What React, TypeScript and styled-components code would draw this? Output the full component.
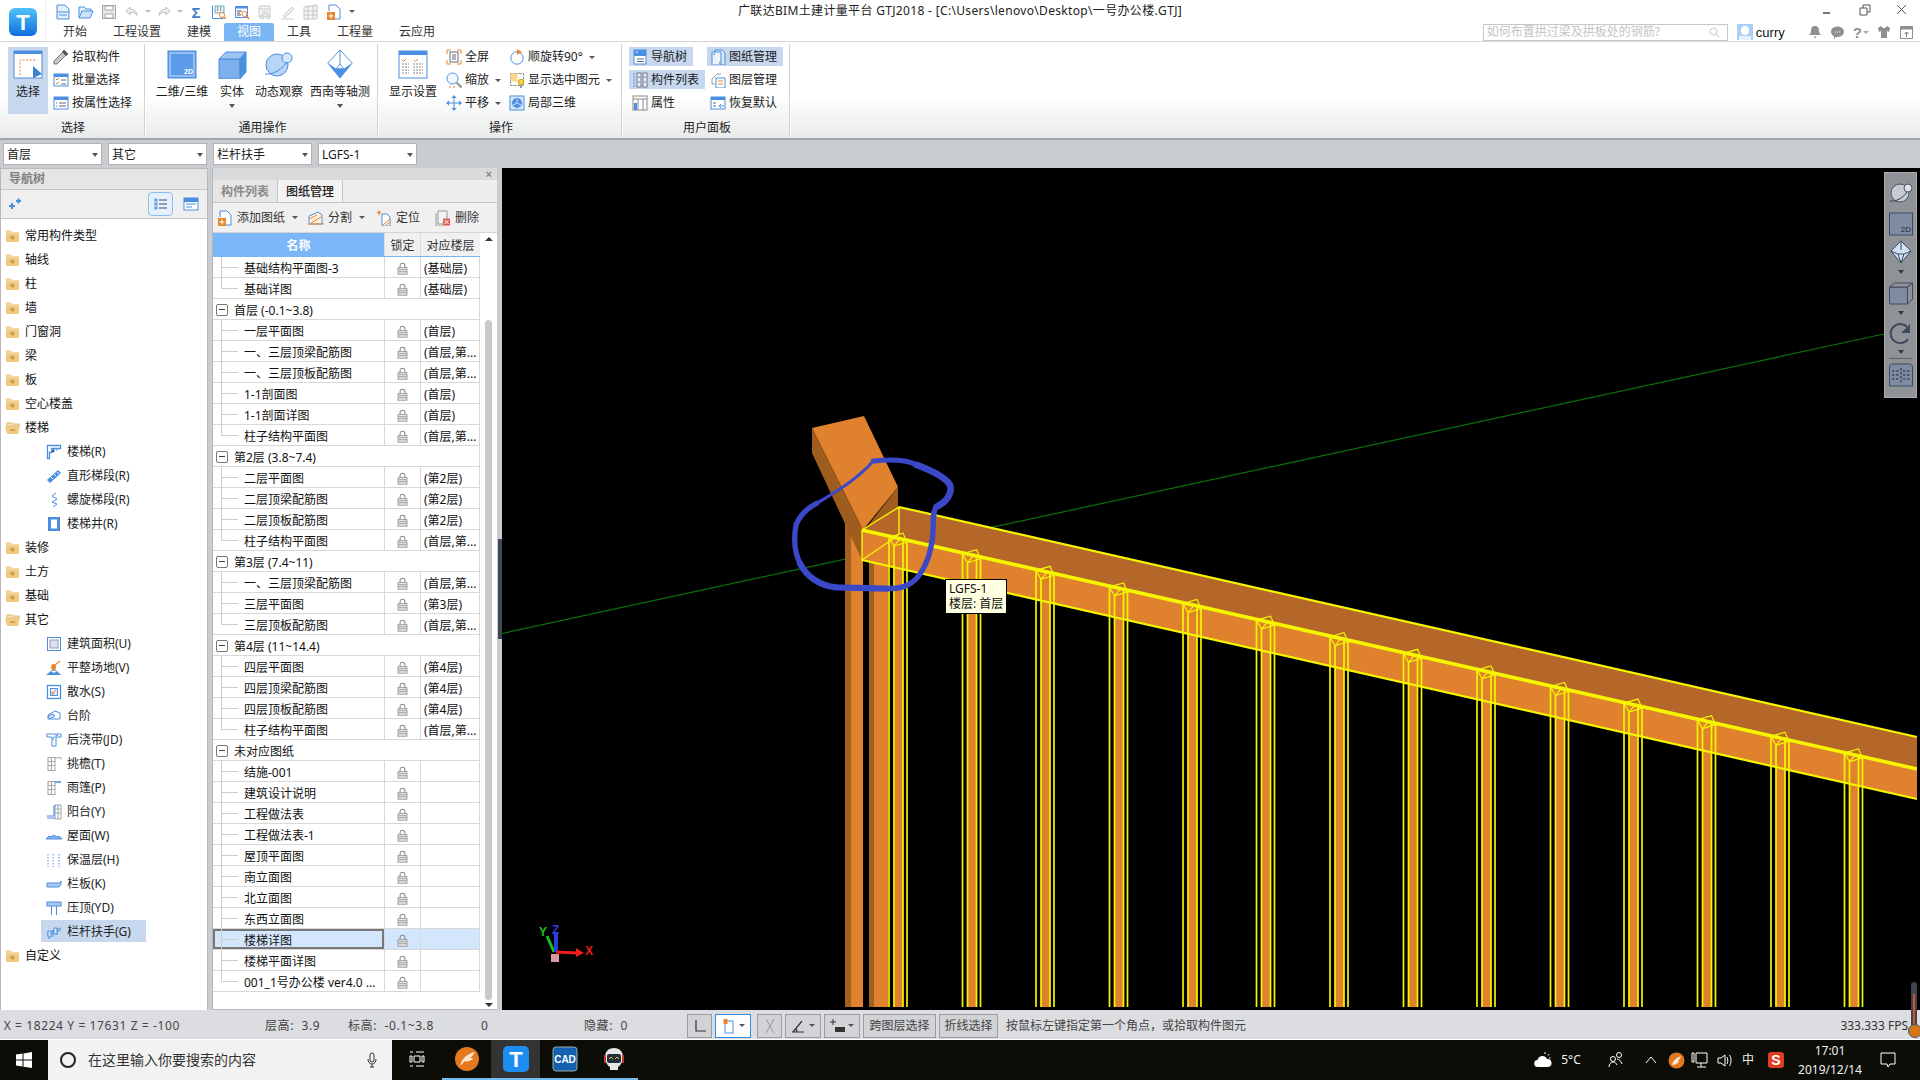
import React from "react";
import styled, { createGlobalStyle } from "styled-components";

const FONT = `"Noto Sans", "Noto Sans CJK SC", "Liberation Sans", sans-serif`;
const B = "#4a8fe0";
const O = "#e8842c";
const G = "#a6a6a6";

const Global = createGlobalStyle`
  html, body { margin: 0; padding: 0; background: #000; }
  * { box-sizing: border-box; }
`;

const Root = styled.div`
  position: relative; width: 1920px; height: 1080px; overflow: hidden;
  display: flex; flex-direction: column; background: #fff;
  font-family: ${FONT}; font-size: 12px; line-height: 1; color: #1c1c1c;
`;

/* ---------- icons ---------- */
const Svg = styled.svg<{ $s: number }>`
  width: ${(p) => p.$s}px; height: ${(p) => p.$s}px; flex: none; display: block;
`;

const icons: Record<string, React.ReactNode> = {
  new: <><path d="M2 1h8l4 4v10H2z" fill="#e4effb" stroke={B} /><path d="M2 8h12" stroke={B} /><path d="M4 11h8" stroke={B} /></>,
  open: <><path d="M1 14V3h5l2 2h5v3" fill="#e4effb" stroke={B} /><path d="M1 14l3-7h11l-3 7z" fill="#cfe2f8" stroke={B} /></>,
  save: <><path d="M1.5 1.5h13v13h-13z" fill="#e8e8e8" stroke={G} /><path d="M4 2h8v4H4zM4 10h8v4H4z" fill="#fff" stroke={G} /></>,
  undo: <path d="M6 3 2 7l4 4V8.5c4-.5 6 1 7 3-.3-4-3-6.5-7-6.5z" fill="#eee" stroke="#bbb" />,
  redo: <path d="M10 3l4 4-4 4V8.5c-4-.5-6 1-7 3 .3-4 3-6.5 7-6.5z" fill="#eee" stroke="#bbb" />,
  sigma: <text x="8" y="14" textAnchor="middle" fontSize="15" fontWeight="700" fill="#3d7fd0" fontFamily="Liberation Sans">Σ</text>,
  gridMag: <><path d="M1.5 14.5V1.5M1.5 14.5h11" stroke={B} /><path d="M4 2h9v7H4z" fill="#dfeafa" stroke="#7aa" /><path d="M6 4h1M9 4h1M6 6h1M9 6h1" stroke="#555" /><circle cx="11" cy="11" r="2.5" fill="#fff" stroke={O} /><path d="M13 13l2 2" stroke={O} strokeWidth="1.5" /></>,
  tblMag: <><path d="M1.5 2.5h12v11h-12z" fill="#fff" stroke={B} /><path d="M1.5 2.5h12v2h-12z" fill={B} /><path d="M3 7h5M3 9h3M3 11h4" stroke="#556" /><circle cx="10.5" cy="10" r="2.5" fill="#fff" stroke={O} /><path d="M12.5 12l2.5 3" stroke={O} strokeWidth="1.5" /></>,
  greyTbl: <><path d="M2 2h11v11H2z" fill="#f4f4f4" stroke="#ccc" /><path d="M2 5h11M5 8h6M5 10h6" stroke="#ccc" /><circle cx="5" cy="13" r="2" fill="none" stroke="#ccc" /><circle cx="11" cy="13" r="2" fill="none" stroke="#ccc" /></>,
  greyPen: <><path d="M3 12 12 3l2 2-9 9z" fill="#eee" stroke="#ccc" /><path d="M1 15h13" stroke="#ccc" /></>,
  greyGrid: <path d="M1 3l13-2v14H1zM5 2.5V15M10 2V15M1 7h13M1 11h13" fill="#f6f6f6" stroke="#c4c4c4" />,
  addPage: <><path d="M3 1h7l4 4v10H7" fill="#fff" stroke={B} /><path d="M3 1v6" stroke={B} /><rect x="1" y="8" width="8" height="8" fill={O} /><path d="M5 9.5v5M2.5 12h5" stroke="#fff" /></>,
  pick: <><path d="M11 1l4 4-2 1-9 9-3 0 0-3 9-9z" fill="#c7c7c7" stroke="#777" /><path d="M11 1l4 4-2 2-4-4z" fill="#555" /></>,
  batch: <><rect x="1" y="2" width="14" height="12" fill="#fff" stroke={B} /><rect x="1" y="2" width="14" height="3" fill={B} /><path d="M3 7l1 1 2-2M3 11l1 1 2-2" stroke={O} fill="none" /><path d="M8 8h5M8 12h5" stroke="#667" /></>,
  attr: <><rect x="1" y="2" width="14" height="12" fill="#fff" stroke={B} /><rect x="1" y="2" width="14" height="3" fill={B} /><path d="M3 8h1M3 11h1M6 8h7M6 11h7" stroke="#667" /></>,
  full: <><path d="M1 5V1h4M11 1h4v4M15 11v4h-4M5 15H1v-4" fill="none" stroke={O} /><rect x="4" y="3" width="8" height="10" fill="#fff" stroke="#667" /><path d="M6 6h4M6 8h4M6 10h4" stroke="#667" /></>,
  zoom: <><circle cx="6.5" cy="6.5" r="5.5" fill="#f2f7fd" stroke={B} /><path d="M10.5 10.5l5 5" stroke="#999" strokeWidth="2.4" /><path d="M3 15h2M7 15h2" stroke={O} /></>,
  pan: <><path d="M8 0l2.5 3h-5zM8 16l2.5-3h-5zM0 8l3-2.5v5zM16 8l-3-2.5v5z" fill={B} /><path d="M8 3v10M3 8h10" stroke={B} /></>,
  rot: <><circle cx="8" cy="9" r="6.2" fill="none" stroke={B} /><path d="M8 0l5 3-5 3z" fill={O} /></>,
  showSel: <><path d="M1.5 1.5h13v12h-13z" fill="none" stroke="#888" strokeDasharray="3 1" /><rect x="1.5" y="1.5" width="7" height="8" fill="#fbd98c" /><circle cx="12" cy="10" r="2.8" fill="#f7d24a" stroke="#c9a020" /><path d="M11 13.5h2V16h-2z" fill="#999" /></>,
  local: <><rect x="1" y="1" width="14" height="14" fill="#d7e6f8" stroke={B} /><circle cx="8" cy="8" r="5" fill={B} /><path d="M8 8V4M8 8l-4 2M8 8l4 2" stroke="#cfe2f8" /></>,
  nav: <><rect x="2" y="1" width="12" height="14" fill="#fff" stroke={B} /><rect x="2" y="1" width="12" height="6" fill={B} /><path d="M4 3h2" stroke="#fff" /><path d="M5 10h7M5 12.5h7" stroke="#667" /></>,
  drawMgr: <><path d="M5 1h7l3 3v12H5z" fill="#dbe8f8" stroke={B} /><path d="M2 3h9v13H2z" fill="#eef4fc" stroke={B} /><path d="M4 6V5h1M9 14h1v-1" stroke="#667" fill="none" /></>,
  list: <><path d="M1 2h2M1 5h2M1 8h2M1 11h2M1 14h2" stroke={B} /><rect x="5" y="1" width="4" height="14" fill="#e8f0fb" stroke="#778" /><rect x="11" y="1" width="4" height="14" fill="#e8f0fb" stroke="#778" /><path d="M6 5h2M6 10h2M12 5h2M12 10h2" stroke="#778" /></>,
  layer: <><path d="M2 7l5-5h4" fill="none" stroke="#999" /><path d="M2 7v5h3" fill="none" stroke="#999" /><rect x="6" y="6" width="9" height="10" fill="#fff" stroke={B} /><path d="M8 9h5M8 12h5" stroke={O} /></>,
  prop: <><rect x="1" y="1" width="14" height="14" fill="#fff" stroke="#888" /><path d="M1 4h14M6 4v11M11 4v11" stroke="#888" /><rect x="2" y="8" width="3" height="7" fill={B} /></>,
  reset: <><rect x="1" y="2" width="14" height="12" fill="#fff" stroke={B} /><rect x="1" y="2" width="14" height="3" fill={B} /><path d="M3 8h3M3 11h3" stroke="#667" /><path d="M9 11h5M11 9l-2 2 2 2" stroke={B} fill="none" /></>,
  plusPlus: <><path d="M2 10h6M5 7v6M9 5h5M11.5 2.5v5" stroke={B} strokeWidth="2" /></>,
  tList: <><rect x="2" y="3" width="2" height="2" fill="none" stroke={B} /><rect x="2" y="7" width="2" height="2" fill="none" stroke={B} /><rect x="2" y="11" width="2" height="2" fill="none" stroke={B} /><path d="M6 4h8M6 8h8M6 12h8" stroke="#446" /></>,
  tCard: <><rect x="1" y="2" width="14" height="12" fill="#fff" stroke={B} /><rect x="1" y="2" width="14" height="4" fill={B} /><path d="M3 8h10M3 11h6" stroke={B} /></>,
  folder: <><path d="M1 4V2.5h5L7 4h7v10H1z" fill="#f0cb84" /><path d="M1 5h13" stroke="#f8e3b4" /><path d="M7.5 7v5M5 9.5h5" stroke="#c79a3e" strokeWidth="1.4" /></>,
  folderOpen: <><path d="M2 3h5l1 1h6v2H2z" fill="#f8e3b4" stroke="#ddb66a" /><path d="M0 6h15l-2 8H2z" fill="#f0cb84" /><path d="M5 10h5" stroke="#c79a3e" strokeWidth="1.4" /></>,
  stair: <><path d="M1.5 1.5h13v3h-9v4h-2v6h-2z" fill="#fff" stroke={B} strokeWidth="1.3" /><path d="M8 4.5V8h-2.5M11 4.5V7" stroke={B} /></>,
  straight: <><path d="M1 12 12 2l3 3L4 15z" fill={B} /><path d="M5 9l2 2M8 6l2 2M11 4l2 2" stroke="#fff" /></>,
  spiral: <path d="M10 1 6 4l5 3-5 3 5 2-4 3" fill="none" stroke={B} />,
  well: <><rect x="2" y="1" width="12" height="14" fill={B} /><rect x="5" y="3.5" width="6" height="9" fill="#fff" /></>,
  area: <><rect x="1.5" y="1.5" width="13" height="13" fill="#fff" stroke={B} /><rect x="4" y="4" width="8" height="8" fill="#dde4ef" stroke="#8a9ab5" /></>,
  level: <><path d="M0 15l5-4 3 2 3-2 4 4z" fill={B} /><path d="M5 11l3-3 3 3z" fill="#9aa" /><ellipse cx="7.5" cy="7" rx="2.5" ry="3" fill={O} /><path d="M9 5l5-4" stroke={O} strokeWidth="1.2" /></>,
  apron: <><rect x="1.5" y="1.5" width="13" height="13" fill="#fff" stroke={B} strokeWidth="1.3" /><rect x="4.5" y="4.5" width="7" height="7" fill="#e6eef9" stroke={B} /><path d="M10 6 6 10M6 7.5V10h2.5" stroke={O} fill="none" /></>,
  step: <><path d="M2 7l7-4 5 2v6H2z" fill="#fff" stroke={B} /><path d="M2 8l5-2 2 2-5 3z" fill="#cfe2f8" stroke={B} /></>,
  strip: <><path d="M1 2h14v3H10v9H6V5H1z" fill="#fff" stroke={B} /><path d="M7 8c0-3 2-4 5-5" stroke={B} fill="none" /></>,
  eaves: <><rect x="2" y="1.5" width="7" height="13" fill="#fff" stroke={G} /><path d="M2 5.5h7M2 9.5h7M5.5 1.5v13" stroke={G} /><path d="M9 2l6-.5v2" stroke={G} fill="none" /></>,
  canopy: <><rect x="2" y="1.5" width="7" height="13" fill="#fff" stroke={G} /><path d="M2 5.5h7M2 9.5h7M5.5 1.5v13" stroke={G} /><path d="M9 2h6" stroke={B} strokeWidth="1.6" /></>,
  balcony: <><rect x="9" y="1" width="6" height="14" fill="#fff" stroke={G} /><path d="M9 5h6M9 9h6M12 1v14" stroke={G} /><path d="M1 14h8M1 12h7V2h2" stroke={B} strokeWidth="1.2" fill="none" /></>,
  roof: <path d="M0 11l3-3 2 1 3-2 3 2 2-1 3 3z" fill="#8ab4ea" stroke={B} />,
  insulate: <path d="M2 2v13M13 2v13M7 2v13" stroke={B} strokeDasharray="1.5 1.5" fill="none" />,
  parapet: <path d="M1 7h12l2-2v3l-2 3H1z" fill="#a9c9f2" stroke={B} />,
  coping: <><rect x="1" y="2" width="14" height="4" fill="#a9c9f2" stroke={B} /><path d="M5.5 6v9M10.5 6v9" stroke={B} /></>,
  rail: <><path d="M1 9l14-5M3 8v7M7 6v7M11 4v7" stroke={B} fill="none" /><path d="M1 11l14-5" stroke={B} /><path d="M2 7h3v6H2zM8 4h3v6H8z" fill="#dce9fa" stroke={B} /></>,
  lock: <><path d="M5 7V4.5C5 2.5 6.3 1.5 8 1.5s3 1 3 3V7" fill="none" stroke="#888" strokeWidth="1.3" /><rect x="2.5" y="7" width="11" height="8" fill="#eee" stroke="#888" /><path d="M3 9.5h10M3 12h10" stroke="#888" /></>,
  split: <><path d="M1 14V6l9-4 4 3v9z" fill="#fff2e2" stroke={B} /><path d="M1 9l8-4M3 13l10-6M0 14h16" stroke={O} /></>,
  locate: <><path d="M6 4h5l3 3v9H6z" fill="#fff" stroke={B} /><path d="M7 15l7-6M10 15l4-3" stroke={O} /><path d="M3 0l1 2 2 .5-2 .8L3 6l-.7-2.7L0 2.5 2 2z" fill={O} /></>,
  del: <><path d="M3 1h9v13H3z" fill="#f2f2f2" stroke="#999" /><path d="M1 3v13h7" fill="none" stroke="#999" /><rect x="8" y="8.5" width="7" height="7" fill="#e25b52" /><path d="M9.5 10l4 4M13.5 10l-4 4" stroke="#fff" /></>,
  axis: <path d="M4 2v11h10" fill="none" stroke="#333" strokeWidth="1.2" />,
  sel: <><rect x="4" y="3" width="8" height="12" fill="#fff" stroke={B} /><rect x="2.5" y="1" width="4" height="5" fill={O} /></>,
  cross: <path d="M4 1l8 14M12 1 4 15" stroke="#999" fill="none" />,
  angle: <path d="M1 14h12M2 14 11 3M6 14c0-2-1-3-2-3" stroke="#333" fill="none" strokeWidth="1.2" />,
  plusBar: <><path d="M3 1v6M0 4h6" stroke="#333" /><rect x="5" y="9" width="10" height="5" fill="#333" /></>,
};

const Icon = ({ n, s = 16 }: { n: string; s?: number }) => (
  <Svg $s={s} viewBox="0 0 16 16">{icons[n]}</Svg>
);

/* ---------- top bar ---------- */
const TopBar = styled.header`
  height: 42px; flex: none; display: flex; border-bottom: 1px solid #d6d6d6; background: #fff;
`;
const LogoBox = styled.div`
  width: 46px; flex: none; padding: 8px 0 0 9px; border-right: 1px solid #eee;
`;
const TopColumn = styled.div`
  flex: 1; min-width: 0; display: flex; flex-direction: column;
`;
const TitleRow = styled.div`
  height: 23px; flex: none; display: grid; grid-template-columns: 692px 444px 1fr; align-items: center;
`;
const QuickBar = styled.div`
  display: flex; align-items: center; padding-left: 9px; gap: 7px;
`;
const TitleText = styled.div`
  font-size: 12px; color: #222; text-align: center; white-space: nowrap; padding-bottom: 1px; letter-spacing: .33px;
`;
const WindowButtons = styled.div`
  display: flex; justify-content: flex-end; gap: 21px; padding: 0 10px 3px 0;
`;
const TinyCaret = styled.span<{ $c?: string }>`
  width: 0; height: 0; flex: none;
  border-left: 3px solid transparent; border-right: 3px solid transparent;
  border-top: 3px solid ${(p) => p.$c || "#555"};
`;
const QuickCaret = styled(TinyCaret)`
  margin: 0 -2px;
`;
const TabRow = styled.div`
  height: 18px; flex: none; display: flex; align-items: stretch; padding-left: 4px;
`;
const Tab = styled.div<{ $on?: boolean }>`
  display: flex; align-items: center; padding: 0 13px;
  background: ${(p) => (p.$on ? "#7ab6f3" : "transparent")};
  color: ${(p) => (p.$on ? "#fff" : "#333")};
  border-radius: 2px 2px 0 0;
`;
const TabRight = styled.div`
  margin-left: auto; display: flex; align-items: center; padding-right: 6px;
`;
const SearchBox = styled.div`
  width: 245px; height: 17px; border: 1px solid #c8c8c8; display: flex; align-items: center;
  justify-content: space-between; padding: 0 7px 0 3px; color: #c4c4c4; font-size: 12px;
`;
const Avatar = styled.div`
  width: 16px; height: 16px; margin-left: 9px; background: #a9cff5; position: relative; overflow: hidden;
  &::after { content: ""; position: absolute; left: 4px; top: 2px; width: 8px; height: 9px; border-radius: 4px; background: #fff; }
  &::before { content: ""; position: absolute; left: 2px; top: 12px; width: 12px; height: 6px; background: #e6f1fc; }
`;
const UserName = styled.span`
  font-family: "Liberation Sans", sans-serif; font-size: 13px; margin-left: 3px; width: 52px; color: #111;
`;
const HelpMark = styled.span`
  font-family: "Liberation Sans", sans-serif; font-size: 15px; font-weight: 700; color: #909090; margin-right: -7px;
`;
const UtilGroup = styled.div`
  display: flex; align-items: center; gap: 8px;
`;

/* ---------- ribbon ---------- */
const Ribbon = styled.section`
  height: 98px; flex: none; display: flex; background: linear-gradient(#fff 0, #fff 55%, #e9ebeb 100%);
  border-bottom: 2px solid #a3a5a8;
`;
const Group = styled.div<{ $w: number; $pl: number }>`
  width: ${(p) => p.$w}px; flex: none; display: flex; flex-direction: column;
  padding-left: ${(p) => p.$pl}px; box-shadow: inset -1px 0 0 #fff, inset -2px 0 0 #d2d3d5;
  margin: 2px 0;
`;
const GroupBody = styled.div`
  height: 74px; flex: none; display: flex; padding-top: 1px;
`;
const GroupLabel = styled.div<{ $ml: number }>`
  margin-left: ${(p) => -p.$ml}px; flex: 1; display: flex; align-items: center; justify-content: center; color: #222; padding-top: 2px;
`;
const LargeBtn = styled.div<{ $w: number; $on?: boolean }>`
  width: ${(p) => p.$w}px; height: 67px; margin-top: 2px; flex: none; display: flex; flex-direction: column;
  align-items: center; padding-top: 2px; white-space: nowrap;
  background: ${(p) => (p.$on ? "#c6d7ee" : "transparent")};
`;
const LargeLabel = styled.span`
  margin-top: 7px; height: 12px;
`;
const LargeCaret = styled.span`
  margin-top: 6px; width: 0; height: 0;
  border-left: 3px solid transparent; border-right: 3px solid transparent; border-top: 4px solid #555;
`;
const SmallCol = styled.div<{ $w?: number; $ml?: number }>`
  display: flex; flex-direction: column; flex: none; align-items: flex-start;
  width: ${(p) => (p.$w ? `${p.$w}px` : "auto")}; margin-left: ${(p) => p.$ml || 0}px;
`;
const SmallItem = styled.div<{ $on?: boolean }>`
  height: 19px; margin: 2px 0; display: flex; align-items: center; gap: 3px; padding: 1px 6px 0 3px; white-space: nowrap;
  background: ${(p) => (p.$on ? "#c6d7ee" : "transparent")};
`;
const CaretGap = styled.span`
  margin-left: 3px;
  width: 0; height: 0; border-left: 3px solid transparent; border-right: 3px solid transparent; border-top: 3px solid #555;
`;

/* ---------- combo row ---------- */
const ComboRow = styled.div`
  height: 28px; flex: none; display: flex; gap: 6px; padding: 3px 0 0 3px; background: #c9ccd0;
`;
const Combo = styled.div`
  width: 99px; height: 22px; background: #fff; border: 1px solid #b3b3b3; display: flex; align-items: center;
  justify-content: space-between; padding: 2px 3px 0 3px; font-size: 12px; color: #222;
`;
const ComboCaret = styled.span`
  width: 0; height: 0; border-left: 3.5px solid transparent; border-right: 3.5px solid transparent; border-top: 4px solid #555;
`;

/* ---------- main ---------- */
const Main = styled.main`
  height: 842px; flex: none; display: flex; background: #c9ccd0;
`;
const LeftPanel = styled.aside`
  width: 208px; flex: none; display: flex; flex-direction: column; background: #fff; border-left: 1px solid #b8b8b8; border-right: 1px solid #b8b8b8;
`;
const PanelHeader = styled.div`
  height: 22px; flex: none; background: #e4e5e6; color: #808080; font-weight: 700; padding: 0 0 0 8px;
  display: flex; align-items: center; border-bottom: 1px solid #c4c4c4; border-top: 1px solid #bbb;
`;
const NavTools = styled.div`
  height: 29px; flex: none; background: #efeff0; border-bottom: 1px solid #c4c4c4; display: flex; align-items: center;
  padding: 0 4px 0 6px;
`;
const ToolActive = styled.div`
  margin-left: auto; width: 25px; height: 24px; border: 1px solid #8abdf2; border-radius: 4px; background: #e4f0fc;
  display: flex; align-items: center; justify-content: center;
`;
const ToolPlain = styled.div`
  width: 25px; height: 24px; margin-left: 5px; display: flex; align-items: center; justify-content: center;
`;
const Tree = styled.div`
  flex: 1; padding-top: 4px; display: flex; flex-direction: column;
`;
const TreeRoot = styled.div`
  height: 24px; flex: none; display: flex; align-items: center; gap: 4px; padding: 2px 0 0 4px; color: #111;
`;
const TreeLeaf = styled.div<{ $on?: boolean }>`
  height: 22px; flex: none; margin: 1px 0 1px 40px; width: 105px; display: flex; align-items: center; gap: 5px; padding: 2px 0 0 5px;
  background: ${(p) => (p.$on ? "#c7d7ee" : "transparent")}; color: #222; white-space: nowrap;
`;

const Splitter = styled.div<{ $w: number }>`
  width: ${(p) => p.$w}px; flex: none; background: #c9ccd0;
`;
const SplitHandle = styled.div`
  width: 4px; height: 100px; margin: 371px 0 0 1px; background: #3f4750;
`;
const MidPanel = styled.section`
  width: 285px; flex: none; display: flex; flex-direction: column; background: #fff;
  border-left: 1px solid #b8b8b8; border-bottom: 1px solid #b8b8b8;
`;
const CloseStrip = styled.div`
  height: 12px; flex: none; background: #d9dadc; display: flex; align-items: center; justify-content: flex-end;
  padding-right: 5px; color: #888; font-size: 11px; font-family: "Liberation Sans", sans-serif; font-weight: 700;
`;
const MidTabs = styled.div`
  height: 23px; flex: none; display: flex; background: #eeeeef; border-bottom: 1px solid #c4c4c4;
`;
const MidTab = styled.div<{ $on?: boolean }>`
  width: 65px; display: flex; align-items: center; justify-content: center; padding-top: 2px; font-weight: ${(p) => (p.$on ? 500 : 700)};
  color: ${(p) => (p.$on ? "#222" : "#8a8a8a")};
  background: ${(p) => (p.$on ? "#f3f3f3" : "#e6e6e6")}; border-right: 1px solid #c4c4c4;
`;
const MidTools = styled.div`
  height: 30px; flex: none; display: flex; align-items: center; background: #f0f0f1; padding-left: 4px; color: #333; border-bottom: 1px solid #d4d4d4;
`;
const MidTool = styled.div<{ $w: number }>`
  width: ${(p) => p.$w}px; flex: none; display: flex; align-items: center; gap: 4px;
`;
const MidCaret = styled(TinyCaret)`
  margin-left: 3px;
`;
const TableArea = styled.div`
  flex: 1; min-height: 0; display: flex;
`;
const Table = styled.div`
  width: 267px; flex: none;
`;
const Columns = styled.div<{ $sel?: boolean }>`
  display: grid; grid-template-columns: 171px 36px 60px; height: 21px;
  border-bottom: 1px solid #d8d8d8; background: ${(p) => (p.$sel ? "#d4e6fb" : "#fff")};
`;
const HeadRow = styled(Columns)`
  height: 24px; background: #f0f0f1; border-bottom: 1px solid #7ab6f3;
`;
const HeadName = styled.div`
  background: #7ab6f8; color: #fff; font-weight: 700; display: flex; align-items: center; justify-content: center; padding-top: 2px;
`;
const HeadCell = styled.div`
  display: flex; align-items: center; justify-content: center; color: #333; border-left: 1px solid #dcdcdc; padding-top: 2px;
`;
const NameCell = styled.div<{ $sel?: boolean }>`
  display: flex; align-items: stretch; padding-left: 8px; color: #111;
  outline: ${(p) => (p.$sel ? "2px solid #777" : "none")}; outline-offset: -2px;
`;
const Guide = styled.span<{ $last?: boolean }>`
  position: relative; width: 17px; flex: none; margin-right: 6px;
  &::before { content: ""; position: absolute; left: 0; top: 0; width: 1px; height: ${(p) => (p.$last ? "50%" : "100%")}; background: #cfcfcf; }
  &::after { content: ""; position: absolute; left: 0; top: 50%; width: 17px; height: 1px; background: #cfcfcf; }
`;
const NameText = styled.span`
  display: flex; align-items: center; white-space: nowrap; padding-top: 4px;
`;
const LockCell = styled.div`
  display: flex; align-items: center; justify-content: center; border-left: 1px solid #d8d8d8; padding-top: 3px;
`;
const FloorCell = styled.div`
  display: flex; align-items: center; padding: 4px 0 0 3px; border-left: 1px solid #d8d8d8; border-right: 1px solid #d8d8d8; color: #111; white-space: nowrap;
`;
const GroupRow = styled.div`
  height: 21px; display: flex; align-items: center; gap: 6px; padding: 3px 0 0 3px; border-bottom: 1px solid #d8d8d8; border-right: 1px solid #d8d8d8; color: #111;
`;
const MinusBox = styled.span`
  width: 12px; height: 12px; margin-top: -2px; border: 1px solid #777; border-radius: 2px; position: relative; flex: none;
  &::after { content: ""; position: absolute; left: 2px; top: 4px; width: 6px; height: 1px; background: #444; }
`;
const ScrollCol = styled.div`
  width: 17px; flex: none; display: flex; flex-direction: column; align-items: center; padding-top: 4px;
`;
const ArrowUp = styled.span`
  width: 0; height: 0; border-left: 4px solid transparent; border-right: 4px solid transparent; border-bottom: 4px solid #333;
`;
const ArrowDown = styled.span`
  width: 0; height: 0; margin-top: 3px; border-left: 4px solid transparent; border-right: 4px solid transparent; border-top: 4px solid #333;
`;
const Thumb = styled.div`
  width: 7px; height: 680px; margin-top: 79px; border-radius: 4px; background: #c9c9c9;
`;

/* ---------- viewport ---------- */
const Viewport = styled.div`
  flex: 1; position: relative; background: #000; overflow: hidden;
`;
const Scene = styled.svg`
  display: block; width: 1418px; height: 842px;
`;
const Tip = styled.div`
  position: absolute; left: 443px; top: 411px; width: 62px; height: 35px; background: #ffffe1; border: 1px solid #000;
  padding: 1px 0 0 3px; line-height: 15px; font-size: 12px; color: #111; white-space: nowrap;
`;
const ViewTools = styled.div`
  position: absolute; left: 1382px; top: 4px; width: 33px; height: 226px; background: #8f9297; border: 1px solid #a9abaf;
  display: flex; flex-direction: column; align-items: center; padding-top: 8px;
`;
const ViewCaret = styled.span`
  width: 0; height: 0; flex: none; margin: 6px 0 7px; border-left: 3px solid transparent; border-right: 3px solid transparent; border-top: 4px solid #333b47;
`;
const ViewSep = styled.div`
  width: 23px; height: 1px; flex: none; background: #5f6368; margin: -3px 0 4px;
`;
const ViewIco = styled.svg<{ $m?: number }>`
  width: 26px; height: 24px; flex: none; display: block; margin-bottom: ${(p) => p.$m || 0}px;
`;

/* ---------- status ---------- */
const Status = styled.footer`
  height: 30px; flex: none; display: flex; align-items: center; padding-top: 2px; background: #dcdde0; border-bottom: 1px solid #fff; color: #444;
`;
const Field = styled.span<{ $w: number }>`
  width: ${(p) => p.$w}px; flex: none; white-space: nowrap; letter-spacing: .6px;
`;
const StatBtn = styled.div<{ $w: number; $on?: boolean; $ml?: number }>`
  width: ${(p) => p.$w}px; height: 24px; flex: none; margin-left: ${(p) => p.$ml ?? 3}px; display: flex; align-items: center; justify-content: center; gap: 2px;
  background: ${(p) => (p.$on ? "#fff" : "#d2d3d6")}; border: 1px solid ${(p) => (p.$on ? "#2f8fe8" : "#9c9c9c")};
  color: #444; white-space: nowrap;
`;
const Message = styled.span`
  margin-left: 8px; white-space: nowrap;
`;
const Fps = styled.span`
  margin-left: auto; padding-right: 12px; white-space: nowrap; color: #333;
`;
const Thermo = styled.div`
  position: absolute; left: 1911px; top: 982px; width: 6px; height: 46px; border-radius: 3px 3px 0 0; background: #3c4650;
  &::before { content: ""; position: absolute; left: 2px; top: 12px; width: 2px; height: 36px; background: #d4512a; }
  &::after { content: ""; position: absolute; left: -3px; top: 42px; width: 12px; height: 12px; border-radius: 50%; background: #d4761c; border: 1px solid #4a5560; }
`;

/* ---------- taskbar ---------- */
const Taskbar = styled.footer`
  height: 40px; flex: none; display: flex; align-items: stretch; background: #0d0d08; color: #eee;
`;
const StartBtn = styled.div`
  width: 48px; flex: none; display: flex; align-items: center; justify-content: center;
`;
const TaskSearch = styled.div`
  width: 344px; flex: none; background: #f2f2f2; color: #333; font-size: 14px; display: flex; align-items: center; padding-left: 12px;
`;
const Cortana = styled.span`
  width: 16px; height: 16px; border: 2px solid #222; border-radius: 50%; flex: none; margin-right: 12px;
`;
const MicWrap = styled.div`
  margin-left: auto; margin-right: 12px;
`;
const TaskSlot = styled.div<{ $on?: boolean; $run?: boolean; $w?: number }>`
  width: ${(p) => p.$w || 49}px; flex: none; display: flex; align-items: center; justify-content: center;
  background: ${(p) => (p.$on ? "#333" : "transparent")};
  border-bottom: 2px solid ${(p) => (p.$run ? "#76b9ed" : "transparent")};
`;
const Tray = styled.div`
  margin-left: auto; display: flex; align-items: center; color: #f0f0f0;
`;
const TrayItem = styled.div<{ $w: number; $pr?: number }>`
  width: ${(p) => p.$w}px; padding-right: ${(p) => p.$pr || 0}px; flex: none; display: flex; align-items: center; justify-content: center; font-size: 12px; white-space: nowrap;
`;
const Clock = styled.div`
  width: 76px; flex: none; display: flex; flex-direction: column; align-items: center; gap: 7px; font-size: 12px; white-space: nowrap;
`;

/* ---------- data ---------- */
const topRoots = ["常用构件类型", "轴线", "柱", "墙", "门窗洞", "梁", "板", "空心楼盖"];
const stairs = [["stair", "楼梯(R)"], ["straight", "直形梯段(R)"], ["spiral", "螺旋梯段(R)"], ["well", "楼梯井(R)"]];
const midRoots = ["装修", "土方", "基础"];
const others = [
  ["area", "建筑面积(U)"], ["level", "平整场地(V)"], ["apron", "散水(S)"], ["step", "台阶"], ["strip", "后浇带(JD)"],
  ["eaves", "挑檐(T)"], ["canopy", "雨篷(P)"], ["balcony", "阳台(Y)"], ["roof", "屋面(W)"], ["insulate", "保温层(H)"],
  ["parapet", "栏板(K)"], ["coping", "压顶(YD)"], ["rail", "栏杆扶手(G)"],
];
type R = { g: string } | { n: string; f?: string; sel?: boolean; last?: boolean };
const F = "(首层,第...";
const rows: R[] = [
  { n: "基础结构平面图-3", f: "(基础层)" }, { n: "基础详图", f: "(基础层)", last: true },
  { g: "首层 (-0.1~3.8)" },
  { n: "一层平面图", f: "(首层)" }, { n: "一、三层顶梁配筋图", f: F }, { n: "一、三层顶板配筋图", f: F },
  { n: "1-1剖面图", f: "(首层)" }, { n: "1-1剖面详图", f: "(首层)" }, { n: "柱子结构平面图", f: F, last: true },
  { g: "第2层 (3.8~7.4)" },
  { n: "二层平面图", f: "(第2层)" }, { n: "二层顶梁配筋图", f: "(第2层)" }, { n: "二层顶板配筋图", f: "(第2层)" }, { n: "柱子结构平面图", f: F, last: true },
  { g: "第3层 (7.4~11)" },
  { n: "一、三层顶梁配筋图", f: F }, { n: "三层平面图", f: "(第3层)" }, { n: "三层顶板配筋图", f: F, last: true },
  { g: "第4层 (11~14.4)" },
  { n: "四层平面图", f: "(第4层)" }, { n: "四层顶梁配筋图", f: "(第4层)" }, { n: "四层顶板配筋图", f: "(第4层)" }, { n: "柱子结构平面图", f: F, last: true },
  { g: "未对应图纸" },
  { n: "结施-001" }, { n: "建筑设计说明" }, { n: "工程做法表" }, { n: "工程做法表-1" }, { n: "屋顶平面图" }, { n: "南立面图" },
  { n: "北立面图" }, { n: "东西立面图" }, { n: "楼梯详图", sel: true }, { n: "楼梯平面详图" }, { n: "001_1号办公楼 ver4.0 ...", last: true },
];
const balusters = Array.from({ length: 14 }, (_, i) => 898 + 73.5 * i);
const topY = (x: number) => 530 + (x - 862) * 0.2258;

const Baluster = ({ cx }: { cx: number }) => {
  const t = topY(cx);
  const Y = "#f5f500";
  return (
    <g>
      <rect x={cx - 4} y={t + 6} width={9} height={1007 - t - 6} fill="#df812d" />
      <path d={`M${cx - 9} ${t}V1007M${cx - 4} ${t + 8}V1007M${cx + 5} ${t}V1007M${cx + 9} ${t + 4}V1007`} stroke={Y} strokeWidth="1.7" fill="none" />
      <path d={`M${cx - 9} ${t - 1}L${cx + 5} ${t - 5}L${cx + 9} ${t + 4}L${cx - 4} ${t + 8}Z M${cx - 4} ${t - 2}L${cx + 1} ${t + 2}L${cx - 4} ${t + 8}`} stroke={Y} strokeWidth="1.2" fill="none" />
    </g>
  );
};

export default function App() {
  return (
    <Root>
      <Global />
      <TopBar>
        <LogoBox>
          <Svg $s={28} viewBox="0 0 28 28">
            <defs>
              <linearGradient id="lg" x1="0" y1="0" x2="0" y2="1">
                <stop offset="0" stopColor="#4fc3f7" />
                <stop offset="1" stopColor="#0f6fe0" />
              </linearGradient>
            </defs>
            <rect width="28" height="28" rx="6" fill="url(#lg)" />
            <text x="14" y="22" textAnchor="middle" fontSize="22" fontWeight="700" fill="#fff" fontFamily="Liberation Sans">T</text>
          </Svg>
        </LogoBox>
        <TopColumn>
          <TitleRow>
            <QuickBar>
              <Icon n="new" />
              <Icon n="open" />
              <Icon n="save" />
              <Icon n="undo" />
              <QuickCaret $c="#bbb" />
              <Icon n="redo" />
              <QuickCaret $c="#bbb" />
              <Icon n="sigma" />
              <Icon n="gridMag" />
              <Icon n="tblMag" />
              <Icon n="greyTbl" />
              <Icon n="greyPen" />
              <Icon n="greyGrid" />
              <Icon n="addPage" />
              <TinyCaret />
            </QuickBar>
            <TitleText>广联达BIM土建计量平台 GTJ2018 - [C:\Users\lenovo\Desktop\一号办公楼.GTJ]</TitleText>
            <WindowButtons>
              <Svg $s={16} viewBox="0 0 16 16"><path d="M3 11h7" stroke="#555" strokeWidth="1.6" /></Svg>
              <Svg $s={16} viewBox="0 0 16 16"><path d="M3 6h7v7H3zM6 6V3h7v7h-3" fill="none" stroke="#555" /></Svg>
              <Svg $s={16} viewBox="0 0 16 16"><path d="M3 3l9 9M12 3l-9 9" stroke="#555" /></Svg>
            </WindowButtons>
          </TitleRow>
          <TabRow>
            <Tab>开始</Tab>
            <Tab>工程设置</Tab>
            <Tab>建模</Tab>
            <Tab $on>视图</Tab>
            <Tab>工具</Tab>
            <Tab>工程量</Tab>
            <Tab>云应用</Tab>
            <TabRight>
              <SearchBox>
                如何布置拱过梁及拱板处的钢筋?
                <Svg $s={11} viewBox="0 0 12 12"><circle cx="5" cy="5" r="3.8" fill="none" stroke="#c4c4c4" /><path d="M8 8l3.5 3.5" stroke="#c4c4c4" /></Svg>
              </SearchBox>
              <Avatar />
              <UserName>curry</UserName>
              <UtilGroup>
                <Svg $s={14} viewBox="0 0 14 14"><path d="M7 1c3 0 4 2 4 5 0 2 1 3 2 4H1c1-1 2-2 2-4 0-3 1-5 4-5zM5.5 11.5h3L7 13.5z" fill="#8f8f8f" /></Svg>
                <Svg $s={15} viewBox="0 0 15 15"><path d="M7.5 1.5c3.6 0 6.5 2.3 6.5 5.2s-2.9 5.2-6.5 5.2l-1.5 0-2 2v-2.7C2 10.2 1 8.6 1 6.7 1 3.8 3.9 1.5 7.5 1.5z" fill="#8f8f8f" /><path d="M5 7h1M7 7h1M9 7h1" stroke="#fff" /></Svg>
                <HelpMark>?</HelpMark>
                <TinyCaret $c="#aaa" />
                <Svg $s={14} viewBox="0 0 14 14"><path d="M4 1 1 3l1 4 2-1v7h6V6l2 1 1-4-3-2-2 2H6z" fill="#8f8f8f" /></Svg>
                <Svg $s={15} viewBox="0 0 15 15"><path d="M1.5 1.5h12v12h-12z" fill="#fff" stroke="#8f8f8f" /><path d="M1.5 1.5h12v3h-12z" fill="#8f8f8f" /><path d="M7.5 12V7M5.5 9l2-2 2 2" stroke="#777" fill="none" /></Svg>
              </UtilGroup>
            </TabRight>
          </TabRow>
        </TopColumn>
      </TopBar>

      <Ribbon>
        <Group $w={146} $pl={8}>
          <GroupBody>
            <LargeBtn $w={40} $on>
              <Svg $s={30} viewBox="0 0 30 30">
                <rect x="1" y="2" width="28" height="27" fill="#fff" stroke={B} />
                <rect x="1" y="2" width="28" height="3" fill={B} />
                <path d="M7 26V11h17" fill="none" stroke={O} strokeDasharray="2 1.5" />
                <path d="M20 17l9 8-9 4z" fill="#3f7fd0" />
              </Svg>
              <LargeLabel>选择</LargeLabel>
            </LargeBtn>
            <SmallCol $ml={2}>
              <SmallItem><Icon n="pick" />拾取构件</SmallItem>
              <SmallItem><Icon n="batch" />批量选择</SmallItem>
              <SmallItem><Icon n="attr" />按属性选择</SmallItem>
            </SmallCol>
          </GroupBody>
          <GroupLabel $ml={8}>选择</GroupLabel>
        </Group>

        <Group $w={233} $pl={8}>
          <GroupBody>
            <LargeBtn $w={56}>
              <Svg $s={30} viewBox="0 0 30 30">
                <rect x="1" y="2" width="28" height="27" fill="#5b9be8" stroke={B} />
                <rect x="3" y="4" width="24" height="23" fill="#5b9be8" stroke="#fff" strokeWidth=".7" />
                <text x="26" y="25" textAnchor="end" fontSize="7" fontWeight="700" fill="#fff" fontFamily="Liberation Sans">2D</text>
              </Svg>
              <LargeLabel>二维/三维</LargeLabel>
            </LargeBtn>
            <LargeBtn $w={44}>
              <Svg $s={30} viewBox="0 0 30 30">
                <path d="M2 10h21v20H2z" fill="#7fb0ec" stroke={B} />
                <path d="M2 10l7-7h20l-6 7z" fill="#9cc3f1" stroke={B} />
                <path d="M23 10l6-7v20l-6 7z" fill="#4a8fe0" stroke={B} />
              </Svg>
              <LargeLabel>实体</LargeLabel>
              <LargeCaret />
            </LargeBtn>
            <LargeBtn $w={50}>
              <Svg $s={30} viewBox="0 0 30 30">
                <circle cx="13" cy="16" r="11" fill="#b9d5f6" stroke={B} />
                <circle cx="23" cy="9" r="5" fill="#d5e6fa" stroke={B} />
                <path d="M1 25c6 1 16-3 22-12" fill="none" stroke={B} />
              </Svg>
              <LargeLabel>动态观察</LargeLabel>
            </LargeBtn>
            <LargeBtn $w={72}>
              <Svg $s={30} viewBox="0 0 30 32">
                <path d="M15 1l13 14-13 16L2 15z" fill="#fff" stroke={B} />
                <path d="M2 15 11 21h8l9-6-13 16z" fill={B} />
                <path d="M11 21l4-5 4 5z" fill="#fff" stroke={B} />
                <path d="M15 1v15" stroke={B} />
              </Svg>
              <LargeLabel>西南等轴测</LargeLabel>
              <LargeCaret />
            </LargeBtn>
          </GroupBody>
          <GroupLabel $ml={8}>通用操作</GroupLabel>
        </Group>

        <Group $w={244} $pl={4}>
          <GroupBody>
            <LargeBtn $w={60}>
              <Svg $s={30} viewBox="0 0 30 30">
                <rect x="1" y="2" width="28" height="27" fill="#fff" stroke={B} />
                <rect x="1" y="2" width="28" height="4" fill={B} />
                <path d="M4 11l1.5 1.5L8 10M16 11l1.5 1.5L20 10" stroke={O} fill="none" />
                <path d="M4 15h7M4 18h7M4 21h7M4 24h7M15 15h10M15 18h10M15 21h10M15 24h10" stroke="#8a8a8a" strokeDasharray="2 1" />
              </Svg>
              <LargeLabel>显示设置</LargeLabel>
            </LargeBtn>
            <SmallCol $w={63}>
              <SmallItem><Icon n="full" />全屏</SmallItem>
              <SmallItem><Icon n="zoom" />缩放<CaretGap /></SmallItem>
              <SmallItem><Icon n="pan" />平移<CaretGap /></SmallItem>
            </SmallCol>
            <SmallCol>
              <SmallItem><Icon n="rot" />顺旋转90°<CaretGap /></SmallItem>
              <SmallItem><Icon n="showSel" />显示选中图元<CaretGap /></SmallItem>
              <SmallItem><Icon n="local" />局部三维</SmallItem>
            </SmallCol>
          </GroupBody>
          <GroupLabel $ml={4}>操作</GroupLabel>
        </Group>

        <Group $w={168} $pl={6}>
          <GroupBody>
            <SmallCol $w={78}>
              <SmallItem $on><Icon n="nav" />导航树</SmallItem>
              <SmallItem $on><Icon n="list" />构件列表</SmallItem>
              <SmallItem><Icon n="prop" />属性</SmallItem>
            </SmallCol>
            <SmallCol>
              <SmallItem $on><Icon n="drawMgr" />图纸管理</SmallItem>
              <SmallItem><Icon n="layer" />图层管理</SmallItem>
              <SmallItem><Icon n="reset" />恢复默认</SmallItem>
            </SmallCol>
          </GroupBody>
          <GroupLabel $ml={6}>用户面板</GroupLabel>
        </Group>
      </Ribbon>

      <ComboRow>
        {["首层", "其它", "栏杆扶手", "LGFS-1"].map((c) => (
          <Combo key={c}>{c}<ComboCaret /></Combo>
        ))}
      </ComboRow>

      <Main>
        <LeftPanel>
          <PanelHeader>导航树</PanelHeader>
          <NavTools>
            <Icon n="plusPlus" />
            <ToolActive><Icon n="tList" /></ToolActive>
            <ToolPlain><Icon n="tCard" /></ToolPlain>
          </NavTools>
          <Tree>
            {topRoots.map((t) => <TreeRoot key={t}><Icon n="folder" />{t}</TreeRoot>)}
            <TreeRoot><Icon n="folderOpen" />楼梯</TreeRoot>
            {stairs.map(([i, t]) => <TreeLeaf key={t}><Icon n={i} />{t}</TreeLeaf>)}
            {midRoots.map((t) => <TreeRoot key={t}><Icon n="folder" />{t}</TreeRoot>)}
            <TreeRoot><Icon n="folderOpen" />其它</TreeRoot>
            {others.map(([i, t]) => <TreeLeaf key={t} $on={i === "rail"}><Icon n={i} />{t}</TreeLeaf>)}
            <TreeRoot><Icon n="folder" />自定义</TreeRoot>
          </Tree>
        </LeftPanel>
        <Splitter $w={4} />
        <MidPanel>
          <CloseStrip>×</CloseStrip>
          <MidTabs>
            <MidTab>构件列表</MidTab>
            <MidTab $on>图纸管理</MidTab>
          </MidTabs>
          <MidTools>
            <MidTool $w={91}><Icon n="addPage" />添加图纸<MidCaret /></MidTool>
            <MidTool $w={68}><Icon n="split" />分割<MidCaret /></MidTool>
            <MidTool $w={59}><Icon n="locate" />定位</MidTool>
            <MidTool $w={50}><Icon n="del" />删除</MidTool>
          </MidTools>
          <TableArea>
            <Table>
              <HeadRow>
                <HeadName>名称</HeadName>
                <HeadCell>锁定</HeadCell>
                <HeadCell>对应楼层</HeadCell>
              </HeadRow>
              {rows.map((r, i) =>
                "g" in r ? (
                  <GroupRow key={i}><MinusBox />{r.g}</GroupRow>
                ) : (
                  <Columns key={i} $sel={r.sel}>
                    <NameCell $sel={r.sel}>
                      <Guide $last={r.last} />
                      <NameText>{r.n}</NameText>
                    </NameCell>
                    <LockCell><Icon n="lock" s={13} /></LockCell>
                    <FloorCell>{r.f}</FloorCell>
                  </Columns>
                )
              )}
            </Table>
            <ScrollCol>
              <ArrowUp />
              <Thumb />
              <ArrowDown />
            </ScrollCol>
          </TableArea>
        </MidPanel>
        <Splitter $w={5}><SplitHandle /></Splitter>
        <Viewport>
          <Scene viewBox="502 168 1418 842">
            <path d="M502 633.5L1884 334" stroke="#0b6f0b" strokeWidth="1.2" />
            <rect x="845" y="520" width="6" height="487" fill="#a3601f" />
            <rect x="851" y="525" width="12" height="482" fill="#df812d" />
            <rect x="869" y="556" width="5" height="451" fill="#a3601f" />
            <rect x="874" y="552" width="14" height="455" fill="#df812d" />
            <path d="M812 428 864 416 898 487 863 530z" fill="#df812d" />
            <path d="M812 428 812 453 862 560 863 530z" fill="#9e5c1e" />
            <path d="M898 487 898 510 863 532z" fill="#9e5c1e" />
            <path d="M862 530 899 507 1917 737 1917 769z" fill="#b5672a" />
            <path d="M862 530 1917 769 1917 799 862 560z" fill="#df812d" />
            {balusters.map((c) => <Baluster key={c} cx={c} />)}
            <path d="M862 530 1917 769" stroke="#f5f500" strokeWidth="3.6" />
            <path d="M899 507 1917 737M862 560 1917 799" stroke="#f5f500" strokeWidth="2.2" />
            <path d="M862 530 899 507V534M862 530V560L890 541M899 534 890 541" stroke="#f5f500" strokeWidth="1.4" fill="none" />
            <rect x="1917" y="168" width="3" height="842" fill="#000" />
            <g transform="translate(760 400) scale(.3333)" fill="none" stroke="#3b49c9" strokeLinecap="round" strokeLinejoin="round">
              <path d="M340 183C390 178 440 178 470 195" strokeWidth="15" />
              <path d="M470 195C510 210 555 230 570 255C578 280 560 305 530 320" strokeWidth="20" />
              <path d="M530 320C515 335 522 380 518 410C512 460 500 500 470 535C445 560 420 566 380 566" strokeWidth="16" />
              <path d="M380 566L230 562C180 558 140 530 120 490" strokeWidth="19" />
              <path d="M120 490C105 460 100 420 108 375C120 345 140 325 170 310" strokeWidth="16" />
              <path d="M170 310C220 280 290 240 340 183" strokeWidth="9" />
            </g>
            <g fontFamily="Liberation Sans" fontSize="12" fontWeight="700">
              <path d="M554 952L547 936" stroke="#19c219" strokeWidth="3" />
              <path d="M556 952V932" stroke="#2a3ee0" strokeWidth="4" />
              <path d="M556 952L578 953" stroke="#ee1c1c" strokeWidth="3" />
              <path d="M576 948l8 5-8 4z" fill="#ee1c1c" />
              <rect x="551" y="954" width="8" height="8" fill="#d89aa0" />
              <text x="539" y="936" fill="#19c219">Y</text>
              <text x="552" y="934" fill="#2a3ee0">Z</text>
              <text x="585" y="955" fill="#ee1c1c">X</text>
            </g>
          </Scene>
          <Tip>LGFS-1<br />楼层: 首层</Tip>
          <ViewTools>
            <ViewIco viewBox="0 0 26 24" $m={7}>
              <circle cx="12" cy="12" r="9" fill="#c5cbd4" stroke="#4b5565" />
              <circle cx="20" cy="7" r="4" fill="#dfe3e8" stroke="#4b5565" />
              <path d="M2 20c6 1 13-3 17-9" stroke="#333b47" fill="none" />
            </ViewIco>
            <ViewIco viewBox="0 0 26 24" $m={4}>
              <rect x="1.5" y="1" width="23" height="22" fill="#7e8ca3" stroke="#3f4a5c" />
              <text x="23" y="20" textAnchor="end" fontSize="8" fill="#1f2835" fontFamily="Liberation Sans">2D</text>
            </ViewIco>
            <ViewIco viewBox="0 0 26 24">
              <path d="M13 1l10 10-10 12L3 11z" fill="#cfdff5" stroke="#3f4a5c" />
              <path d="M3 11l7 3h6l7-3M10 14l3 9 3-9M13 1v9" fill="none" stroke="#3f4a5c" />
            </ViewIco>
            <ViewCaret />
            <ViewIco viewBox="0 0 26 24">
              <path d="M1.5 6h18v17h-18z" fill="#7e8ca3" stroke="#3f4a5c" />
              <path d="M1.5 6l5-4h18l-5 4zM19.5 6l5-4v16l-5 5z" fill="#8f9297" stroke="#3f4a5c" />
            </ViewIco>
            <ViewCaret />
            <ViewIco viewBox="0 0 26 24" $m={-2}>
              <path d="M20 17a9.5 9.5 0 1 1-1-12" fill="none" stroke="#3f4a5c" strokeWidth="2" />
              <path d="M22 2v9h-9z" fill="#3f4a5c" />
            </ViewIco>
            <ViewCaret />
            <ViewSep />
            <ViewIco viewBox="0 0 26 24">
              <path d="M1.5 3l2-2h19l2 2v20h-23z" fill="#7e8ca3" stroke="#3f4a5c" />
              <path d="M13 5v16M4 8h7M4 12h7M4 16h7M15 8h7M15 12h7M15 16h7" stroke="#20293a" strokeDasharray="2.5 1.5" />
            </ViewIco>
          </ViewTools>
        </Viewport>
      </Main>

      <Status>
        <Field $w={265}>&nbsp;X = 18224 Y = 17631 Z = -100</Field>
        <Field $w={83}>层高:&nbsp; 3.9</Field>
        <Field $w={133}>标高:&nbsp; -0.1~3.8</Field>
        <Field $w={103}>0</Field>
        <Field $w={103}>隐藏:&nbsp; 0</Field>
        <StatBtn $w={25} $ml={0}><Icon n="axis" /></StatBtn>
        <StatBtn $w={36} $on><Icon n="sel" /><TinyCaret /></StatBtn>
        <StatBtn $w={25} $ml={6}><Icon n="cross" /></StatBtn>
        <StatBtn $w={36}><Icon n="angle" /><TinyCaret /></StatBtn>
        <StatBtn $w={36}><Icon n="plusBar" /><TinyCaret /></StatBtn>
        <StatBtn $w={73}>跨图层选择</StatBtn>
        <StatBtn $w={59}>折线选择</StatBtn>
        <Message>按鼠标左键指定第一个角点，或拾取构件图元</Message>
        <Fps>333.333 FPS</Fps>
      </Status>

      <Taskbar>
        <StartBtn>
          <Svg $s={16} viewBox="0 0 16 16"><path d="M0 2.5 6.5 1.6V7.5H0zM7.5 1.4 16 0V7.5H7.5zM0 8.5H6.5V14.4L0 13.5zM7.5 8.5H16V16L7.5 14.7z" fill="#fff" /></Svg>
        </StartBtn>
        <TaskSearch>
          <Cortana />
          在这里输入你要搜索的内容
          <MicWrap>
            <Svg $s={16} viewBox="0 0 16 16"><rect x="6" y="1" width="4" height="9" rx="2" fill="none" stroke="#333" /><path d="M4 7c0 3 1.5 5 4 5s4-2 4-5M8 12v3M6 15h4" fill="none" stroke="#333" /></Svg>
          </MicWrap>
        </TaskSearch>
        <TaskSlot $w={50}>
          <Svg $s={16} viewBox="0 0 16 16"><path d="M1 1h3M7 1h8M1 15h3M7 15h8M5 5h6v6H5zM13 5h2v6h-2zM1 5h2v6H1z" stroke="#fff" fill="none" /></Svg>
        </TaskSlot>
        <TaskSlot $run>
          <Svg $s={26} viewBox="0 0 26 26"><circle cx="13" cy="13" r="12" fill="#e4781f" /><path d="M6 20C8 12 13 8 21 6c-2 3-3 5-5 6 2 0 3 0 3 1-3 2-6 3-8 2z" fill="#fbe6d0" /></Svg>
        </TaskSlot>
        <TaskSlot $on $run>
          <Svg $s={26} viewBox="0 0 26 26">
            <rect width="26" height="26" rx="5" fill="#1c8ef0" />
            <text x="13" y="21" textAnchor="middle" fontSize="22" fontWeight="700" fill="#fff" fontFamily="Liberation Sans">T</text>
          </Svg>
        </TaskSlot>
        <TaskSlot $run>
          <Svg $s={26} viewBox="0 0 26 26">
            <rect x="1" y="1" width="24" height="24" rx="3" fill="#1560b0" stroke="#9aa" />
            <text x="13" y="17" textAnchor="middle" fontSize="10" fontWeight="700" fill="#fff" fontFamily="Liberation Sans">CAD</text>
          </Svg>
        </TaskSlot>
        <TaskSlot $run>
          <Svg $s={26} viewBox="0 0 26 26">
            <path d="M13 2c-6 0-9 4-9 9 0 5 3 9 5 10v3h8v-3c2-1 5-5 5-10 0-5-3-9-9-9z" fill="#e8e8e8" />
            <rect x="6" y="8" width="14" height="9" rx="2" fill="#22303c" />
            <path d="M8 13l2-2 2 2M14 13l2-2 2 2" stroke="#e6c22a" fill="none" />
            <rect x="3" y="9" width="2" height="8" fill="#c0392b" />
            <rect x="21" y="9" width="2" height="8" fill="#c0392b" />
          </Svg>
        </TaskSlot>
        <Tray>
          <TrayItem $w={30}>
            <Svg $s={18} viewBox="0 0 18 18"><path d="M4 16a3.5 3.5 0 0 1-.5-7A5 5 0 0 1 13 8a4 4 0 0 1 1 8z" fill="#fff" /><path d="M11 1v2M15 3l-1 1.5M16.5 7H15" stroke="#fff" /></Svg>
          </TrayItem>
          <TrayItem $w={38} $pr={12}>5°C</TrayItem>
          <TrayItem $w={40}>
            <Svg $s={18} viewBox="0 0 18 18"><circle cx="12" cy="4" r="2.5" fill="none" stroke="#fff" /><circle cx="6" cy="8" r="2.5" fill="none" stroke="#fff" /><path d="M2 16c0-3 2-5 4-5s3 1 4 3M10 8c2 0 4 2 5 5" fill="none" stroke="#fff" /></Svg>
          </TrayItem>
          <TrayItem $w={30}>
            <Svg $s={12} viewBox="0 0 12 12"><path d="M1 9l5-6 5 6" fill="none" stroke="#fff" /></Svg>
          </TrayItem>
          <TrayItem $w={20}>
            <Svg $s={17} viewBox="0 0 17 17"><circle cx="8.5" cy="8.5" r="8" fill="#e4781f" /><path d="M4 13c1-5 4-7 9-9-1 3-2 4-3 5l1 1c-2 2-4 3-7 3z" fill="#fbe6d0" /></Svg>
          </TrayItem>
          <TrayItem $w={28}>
            <Svg $s={18} viewBox="0 0 18 18"><path d="M5 2h11v10H5zM10 12v4M6 16h9M1 2h2v9H1z" fill="none" stroke="#fff" /></Svg>
          </TrayItem>
          <TrayItem $w={22}>
            <Svg $s={18} viewBox="0 0 18 18"><path d="M2 7h3l4-3v11l-4-3H2zM11 6c1 2 1 5 0 7M13.5 4c2 3 2 8 0 11" fill="none" stroke="#fff" /></Svg>
          </TrayItem>
          <TrayItem $w={24}>中</TrayItem>
          <TrayItem $w={32}>
            <Svg $s={18} viewBox="0 0 18 18"><rect x="1" y="1" width="16" height="16" rx="3" fill="#e33c24" /><text x="9" y="14" textAnchor="middle" fontSize="14" fontWeight="700" fill="#fff" fontFamily="Liberation Sans">S</text></Svg>
          </TrayItem>
          <Clock>
            <span>17:01</span>
            <span>2019/12/14</span>
          </Clock>
          <TrayItem $w={52} $pr={12}>
            <Svg $s={18} viewBox="0 0 18 18"><path d="M2 2h14v11h-5l-2 3-1-3H2z" fill="none" stroke="#fff" /></Svg>
          </TrayItem>
        </Tray>
      </Taskbar>
      <Thermo />
    </Root>
  );
}
